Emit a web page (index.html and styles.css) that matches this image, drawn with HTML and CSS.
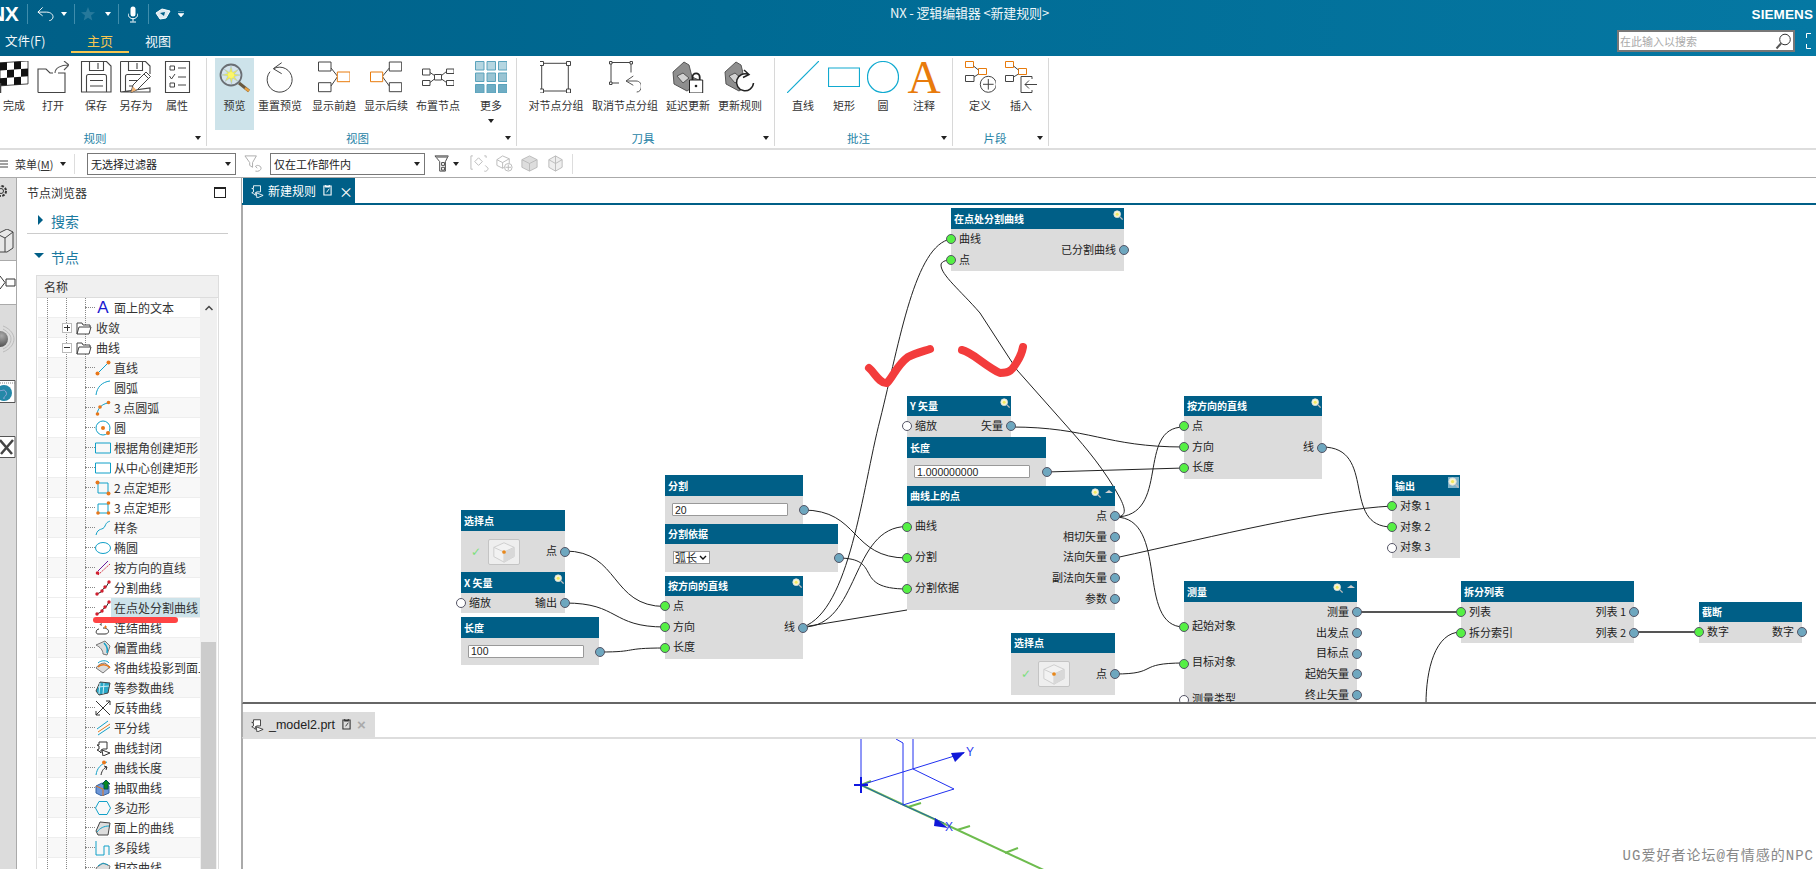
FILE: index.html
```html
<!DOCTYPE html>
<html lang="zh">
<head>
<meta charset="utf-8">
<title>NX - 逻辑编辑器</title>
<link rel="stylesheet" href="styles.css">
</head>
<body>
<svg class="defs" aria-hidden="true">
<defs>
<symbol id="flag" viewBox="0 0 32 32"><g transform="skewY(-4) translate(0 2)"><path d="M2 0h28v23H2z" fill="#fff" stroke="#222" stroke-width=".8"/><path d="M2 0h7v7.700H2zM16 0h7v7.700h-7zM9 7.700h7v7.700H9zM23 7.700h7v7.700h-7zM2 15.400h7V23H2zM16 15.400h7V23h-7z" fill="#111"/></g><path d="M2.500 22V32" stroke="#444" stroke-width="1.500"/></symbol>
<symbol id="open" viewBox="0 0 32 32"><path d="M1 31.500V8h8l4 4h3M21 12h7v19.500H1" fill="none" stroke="#444" stroke-width="1.100"/><path d="M18 12c0-5 6-8 13-8M27 0l5 4-5 5" fill="none" stroke="#555" stroke-width="1.100"/></symbol>
<symbol id="save" viewBox="0 0 32 32"><path d="M1.500.5h25l4.500 4.500v26H1.500zM9.500.5v9h14V.5M18 2v6M6.500 31V15.500q0-2 2-2h16q2 0 2 2V31M10 19.500h13M10 25h13" fill="none" stroke="#444" stroke-width="1.100"/></symbol>
<symbol id="saveas" viewBox="0 0 32 32"><path d="M.5.500h25L30 5v8M30 27v4H.5zM.5 31V.5M8.500.5v9h14V.5M17 2v6M5.500 31V15.500q0-2 2-2h13M9 19.500h8M9 25h4" fill="none" stroke="#444" stroke-width="1.100"/><path d="M11 31.500l2-7.500L26 11l4.500 4.500-13 13z" fill="#fff" stroke="#444"/><path d="M24 13l4.500 4.500" stroke="#444"/><path d="M11 31.500l2-6 3.500 3.500z" fill="#f0b070"/></symbol>
<symbol id="props" viewBox="0 0 32 32"><path d="M4.500.5h24v31h-24z" fill="#fff" stroke="#444" stroke-width="1.100"/><path d="M9 5h4.500v4H9zM9 22h4.500v4H9zM17 7h8M17 16h8M17 24h8" fill="none" stroke="#444"/><path d="M8.500 15l2 3 3.500-5" fill="none" stroke="#444"/></symbol>
<symbol id="preview" viewBox="0 0 32 32"><circle cx="12" cy="14" r="10.500" fill="#d6e4ec" stroke="#6a6f74" stroke-width="1.800"/><path d="M12 5l1.500 6.500L20 8l-5 5 6.500 1-6.500 1.500 4 5-5.500-3.500-1 6-1.500-6-5 3.500 3-5.500-6.500-1 6.500-1.500L5 8l5.500 3.500z" fill="#f5ee4a" stroke="#8fb6dc" stroke-width=".4"/><circle cx="12" cy="14" r="3" fill="#fbf66a"/><path d="M20 22l10 8" stroke="#6a5a40" stroke-width="3"/><path d="M26 27l4 3" stroke="#e8a040" stroke-width="2.500"/></symbol>
<symbol id="reset" viewBox="0 0 32 32"><path d="M17.700 1.700L9.300 7.700l8.400 5M10 7.500A12.500 12.500 0 1 1 6 10.700" fill="none" stroke="#444" stroke-width="1"/></symbol>
<symbol id="pred" viewBox="0 0 32 32"><path d="M.5 1h12.500v9H.5zM.5 21.700h12.500v9H.5z" fill="#fff" stroke="#444"/><path d="M13 7l6.300 8M13 25l6.300-9" stroke="#444"/><path d="M19.300 11H32v9.700H19.300z" fill="#fff" stroke="#e87b0c"/></symbol>
<symbol id="succ" viewBox="0 0 32 32"><path d="M19.300 1h12.400v9H19.300zM19.300 21.700h12.400v9H19.300z" fill="#fff" stroke="#444"/><path d="M19.300 7L12.700 15M19.300 25l-6.600-9" stroke="#444"/><path d="M.5 11h12.200v9.700H.5z" fill="#fff" stroke="#e87b0c"/></symbol>
<symbol id="layout" viewBox="0 0 32 32"><path d="M.5 8h7.500v6H.5zM.5 19.500h7.500v5H.5zM24.500 8H32v4.500h-7.500zM24.500 19.500H32v5h-7.500zM12.500 13.500h7v5.500h-7z" fill="#fff" stroke="#444"/><path d="M8 11.500l4.500 3M8 21.500l4.500-3.500M24.500 10.500l-5 4M24.500 21.500l-5-3.500" stroke="#444"/></symbol>
<symbol id="more" viewBox="0 0 32 32"><g stroke="#5aa3bc"><path d="M.5.5h8.500v8.500H.5zM12 .5h8.500v8.500H12zM23.500.5H32v8.500h-8.500z" fill="#b5d6e1"/><path d="M.5 12h8.500v8.500H.5zM12 12h8.500v8.500H12zM23.500 12H32v8.500h-8.500z" fill="#9ac4d3"/><path d="M.5 23.500h8.500V32H.5zM12 23.500h8.500V32H12zM23.500 23.500H32V32h-8.500z" fill="#6fadc4"/></g></symbol>
<symbol id="group" viewBox="0 0 32 32"><path d="M1.700 2.300h26.600V30H1.700z" fill="none" stroke="#444"/><path d="M-.5.500h4v4h-4zM26.500.5h4v4h-4zM-.5 28h4v4h-4zM26.500 28h4v4h-4z" fill="#fff" stroke="#444"/></symbol>
<symbol id="ungroup" viewBox="0 0 32 32"><path d="M2 1.500h20M2 1.500v20.500h8M22 1.500v10" fill="none" stroke="#444"/><path d="M.5.500h2.500v2.500H.5zM21 .5h2.500v2.500H21zM.5 21h2.500v2.500H.5z" fill="#fff" stroke="#444"/><path d="M24.300 15L17 20l7.300 4.300M17 20h10c4 0 5.500 3 5.300 6-.2 3-2 5-4.600 5" fill="none" stroke="#555"/></symbol>
<symbol id="delay" viewBox="0 0 32 32"><path d="M1 11L12 1l5 3 3 12 7 3v3l-12 8-13-7z" fill="#8e8e8e" stroke="#555"/><path d="M5 15l6-3 6 5-6 5z" fill="#d2d2d2" stroke="#555"/><path d="M17.500 19h13.200v13H17.500z" fill="#fff" stroke="#222"/><path d="M20.500 19v-3a3.600 3.600 0 0 1 7.200 0v3" fill="none" stroke="#222" stroke-width="1.800"/><circle cx="24" cy="25" r="1.300" fill="#222"/></symbol>
<symbol id="update" viewBox="0 0 32 32"><path d="M1 11L12 1l5 3 3 12 7 3v3l-12 8-13-7z" fill="#8e8e8e" stroke="#555"/><path d="M5 15l6-3 6 5-6 5z" fill="#d2d2d2" stroke="#555"/><path d="M29.500 22a8.500 8.500 0 1 1-5-8.500M20 9l5 4.500-6 3" fill="#fff" stroke="#222" stroke-width="1.500"/></symbol>
<symbol id="sline" viewBox="0 0 32 32"><path d="M0 32L32 0" stroke="#11aad0" stroke-width="1.200"/></symbol>
<symbol id="srect" viewBox="0 0 32 32"><path d="M.5 7h31v18.500H.5z" fill="none" stroke="#11aad0" stroke-width="1.200"/></symbol>
<symbol id="scircle" viewBox="0 0 32 32"><circle cx="16" cy="16" r="15.500" fill="none" stroke="#11aad0" stroke-width="1.200"/></symbol>
<symbol id="define" viewBox="0 0 32 32"><path d="M1.500.5h8v6h-8zM14.500 7.500h8v6h-8z" fill="#fff" stroke="#e87b0c"/><path d="M1.500 14.500h8.500v6H1.500z" fill="#fff" stroke="#444"/><path d="M9.500 5l5 4M10 16l4.500-3" stroke="#444"/><circle cx="24.300" cy="23.300" r="8" fill="#fff" stroke="#444"/><path d="M24.300 18v10.600M19 23.300h10.600" stroke="#444"/></symbol>
<symbol id="insert" viewBox="0 0 32 32"><path d="M.5.500h8v6h-8zM13.500 7.500h8v6h-8z" fill="#fff" stroke="#e87b0c"/><path d="M.5 14.500h8v6h-8z" fill="#fff" stroke="#444"/><path d="M8.500 5l5 4M8.500 16l5-3" stroke="#444"/><path d="M27 15.500H16v16h11V29M27 15.500V18" fill="#fff" stroke="#444"/><path d="M32.500 23.500H20l4-4M20 23.500l4 4" fill="none" stroke="#444"/></symbol>
<symbol id="mag" viewBox="0 0 12 12"><circle cx="5" cy="5" r="4" fill="#f7f6d0" stroke="#ddd"/><circle cx="5" cy="5" r="1.800" fill="#f0e860"/><path d="M8 8l3.500 3.500" stroke="#bbb" stroke-width="1.500"/></symbol>
<symbol id="t-line" viewBox="0 0 16 16"><path d="M3 13L13 3" stroke="#11a0c8"/><circle cx="2.500" cy="13.500" r="2" fill="#e8771a"/><circle cx="13.500" cy="2.500" r="2" fill="#e8771a"/></symbol>
<symbol id="t-arc" viewBox="0 0 16 16"><path d="M1 15C2 7 7 2 15 1" fill="none" stroke="#11a0c8"/></symbol>
<symbol id="t-arc3" viewBox="0 0 16 16"><path d="M2 14C3 8 7 4 13 3" fill="none" stroke="#11a0c8"/><circle cx="2.500" cy="14" r="1.800" fill="#e8771a"/><circle cx="5" cy="7" r="1.800" fill="#e8771a"/><circle cx="13.500" cy="2.500" r="1.800" fill="#e8771a"/></symbol>
<symbol id="t-circle" viewBox="0 0 16 16"><circle cx="8" cy="8" r="7" fill="none" stroke="#11a0c8"/><circle cx="8" cy="8" r="2" fill="#e8771a"/><circle cx="13" cy="13" r="2" fill="#e8771a"/></symbol>
<symbol id="t-rect" viewBox="0 0 16 16"><path d="M.5 3h15v10H.5z" fill="none" stroke="#11a0c8"/></symbol>
<symbol id="t-rect2" viewBox="0 0 16 16"><path d="M3 3h10v10H3z" fill="none" stroke="#11a0c8"/><circle cx="2.500" cy="2.500" r="2" fill="#e8771a"/><circle cx="13.500" cy="13.500" r="2" fill="#e8771a"/></symbol>
<symbol id="t-rect3" viewBox="0 0 16 16"><path d="M3 4h10v9H3z" fill="none" stroke="#11a0c8"/><circle cx="3" cy="13" r="1.800" fill="#e8771a"/><circle cx="13.500" cy="3" r="1.800" fill="#e8771a"/><circle cx="13.500" cy="13" r="1.800" fill="#e8771a"/></symbol>
<symbol id="t-spline" viewBox="0 0 16 16"><path d="M1 15C3 7 8 11 10 6S14 2 15 1" fill="none" stroke="#11a0c8"/></symbol>
<symbol id="t-ellipse" viewBox="0 0 16 16"><ellipse cx="8" cy="8" rx="7.500" ry="5.500" fill="none" stroke="#11a0c8"/></symbol>
<symbol id="t-dirline" viewBox="0 0 16 16"><path d="M3 11L13 1" stroke="#6a1b9a"/><path d="M3 15L15 4" stroke="#d02030" stroke-dasharray="1.500 1"/><circle cx="2.500" cy="13" r="1.800" fill="#d02030"/></symbol>
<symbol id="t-split" viewBox="0 0 16 16"><path d="M2 14l4-2 2-3 3-2 3-5" fill="none" stroke="#222"/><circle cx="2" cy="14" r="1.700" fill="#d02030"/><circle cx="7" cy="11" r="1.700" fill="#d02030"/><circle cx="10" cy="7" r="1.700" fill="#d02030"/><circle cx="14" cy="2" r="1.700" fill="#d02030"/></symbol>
<symbol id="t-join" viewBox="0 0 16 16"><path d="M4 1c9 0-3 4 3 4M8 8c7 0 7 6 2 6H3C0 14 1 9 4 9" fill="none" stroke="#333"/><path d="M9 7h3M10.500 5.500v3" stroke="#e8771a"/></symbol>
<symbol id="t-offset" viewBox="0 0 16 16"><path d="M1 5L10 1l5 5-3 9-4-1C8 10 5 7 1 5z" fill="#ddd" stroke="#777"/><path d="M9 3c3 3 4 6 3 10" fill="none" stroke="#11a0c8" stroke-width="1.500"/></symbol>
<symbol id="t-project" viewBox="0 0 16 16"><path d="M1 8L8 13l7-6-5-4C6 3 3 5 1 8z" fill="#ddd" stroke="#777"/><path d="M3 7C6 4 12 4 15 8" fill="none" stroke="#e8771a" stroke-width="1.500"/><path d="M3 3C6 0 12 0 14 3" fill="none" stroke="#11a0c8"/></symbol>
<symbol id="t-iso" viewBox="0 0 16 16"><path d="M1 11L5 2l10 1-2 10-9 2z" fill="#2aa8c8" stroke="#444"/><path d="M3 7l11-1M5 3l-1 11M9 3l-1 11" stroke="#cdeef7"/></symbol>
<symbol id="t-rev" viewBox="0 0 16 16"><path d="M1 1l14 14M15 1L1 15M1 11v4h4M15 5V1h-4" fill="none" stroke="#333"/></symbol>
<symbol id="t-bisect" viewBox="0 0 16 16"><path d="M2 9L13 1M3 15L15 7" stroke="#11a0c8"/><path d="M3 12L15 4" stroke="#e8771a"/></symbol>
<symbol id="t-close" viewBox="0 0 16 16"><path d="M2 5h2V2h8v7H8l-2 1v3l-2-2-2-1 2-1V6z" fill="#fff" stroke="#333"/><path d="M7 10l8 3-7 3z" fill="#fff" stroke="#333"/></symbol>
<symbol id="t-length" viewBox="0 0 16 16"><path d="M1 15C2 8 6 4 12 2" fill="none" stroke="#11a0c8"/><circle cx="9" cy="2.500" r="2" fill="#e8771a"/><path d="M6 15C7 10 9 8 12 7M9 6l3 1-1 3" fill="none" stroke="#333"/></symbol>
<symbol id="t-extract" viewBox="0 0 16 16"><path d="M1 6l6-3 7 3v7l-7 3-6-3z" fill="#6c96d8" stroke="#3060a0"/><path d="M1 6l7 3v7" fill="none" stroke="#e8771a"/><path d="M11 0l4 4h-2v5h-4V4H7z" fill="#0a8a20" stroke="#055"/></symbol>
<symbol id="t-poly" viewBox="0 0 16 16"><path d="M4 1.500h8L15.500 8 12 14.500H4L.5 8z" fill="none" stroke="#11a0c8"/></symbol>
<symbol id="t-surf" viewBox="0 0 16 16"><path d="M1 11L5 2l10 1-2 12H3z" fill="#ddd" stroke="#444"/><path d="M2 12C5 8 9 6 14 6" fill="none" stroke="#11a0c8"/></symbol>
<symbol id="t-polyline" viewBox="0 0 16 16"><path d="M1 1v14h8V6h5v9" fill="none" stroke="#11a0c8"/></symbol>
<symbol id="t-inter" viewBox="0 0 16 16"><path d="M1 8L8 3l7 3-2 8H4z" fill="#ddd" stroke="#777"/><path d="M3 6C6 3 10 3 13 5" fill="none" stroke="#11a0c8"/></symbol>
<symbol id="t-folder" viewBox="0 0 16 16"><path d="M1 14V3h5l1 2h7v2M1 14l2-7h12l-2 7z" fill="#fff" stroke="#444"/></symbol>
<symbol id="selcube" viewBox="0 0 32 26"><path d="M16 3l11 5v10l-11 6-11-6V8z" fill="#f2f2f2" stroke="#ccc"/><path d="M5 8l11 5 11-5M16 13v11" fill="none" stroke="#ccc"/><path d="M16 13l11-5v10l-11 6z" fill="#d8d8d8"/><circle cx="16" cy="13" r="2" fill="#e8871a"/></symbol>
</defs>
</svg>
<div class="app">
  <header class="top">
    <div class="top-row">
      <div class="qat">
        <span class="logo">NX</span><i class="qsep q1"></i>
        <svg class="qi q-undo" viewBox="0 0 18 16"><path d="M6 1L1 6l5 4M1 6h9c5 0 7 3 7 5s-2 4-4 4" fill="none" stroke="#fff"/></svg>
        <i class="tri q-t1"></i><i class="qsep q2"></i>
        <svg class="qi q-star" viewBox="0 0 14 14"><path d="M7 0l2 5 5 .3-4 3.200 1.300 5L7 10.800 2.700 13.500 4 8.500 0 5.300 5 5z" fill="#26799b"/></svg>
        <i class="tri q-t2"></i><i class="qsep q3"></i>
        <svg class="qi q-mic" viewBox="0 0 10 16"><rect x="2.500" y="0" width="5" height="10" rx="2.500" fill="#fff"/><path d="M0 7c0 7 10 7 10 0M5 12v3M2 15.500h6" fill="none" stroke="#fff"/></svg>
        <i class="qsep q4"></i>
        <svg class="qi q-touch" viewBox="0 0 16 12"><path d="M1 5l6-4 8 2-4 7-6 1z" fill="#dfe9ef" stroke="#fff"/><path d="M5 5l5-1-1 4z" fill="#005f87"/></svg>
        <svg class="qi q-more" viewBox="0 0 6 7"><path d="M0 0h6M0 2.500h6l-3 3.500z" fill="#fff" stroke="#fff" stroke-width=".6"/></svg>
      </div>
      <div class="win-title">NX - 逻辑编辑器 &lt;新建规则&gt;</div>
      <div class="brand">SIEMENS</div>
    </div>
    <div class="top-row row2">
      <span class="mtab t-file">文件(F)</span>
      <span class="mtab t-home">主页</span>
      <span class="mtab t-view">视图</span>
      <div class="search"><span class="ph">在此输入以搜索</span>
        <svg class="s-ic" viewBox="0 0 16 17"><circle cx="10" cy="6.500" r="5.300" fill="#fff" stroke="#333"/><path d="M6 10.500L1.500 15.500" stroke="#555" stroke-width="2"/></svg>
      </div>
      <svg class="corners" viewBox="0 0 6 16"><path d="M5 .5H.5V5M.5 11v4.500H5" fill="none" stroke="#fff"/></svg>
    </div>
  </header>

  <section class="ribbon">
    <div class="grp g1">
      <div class="btns">
        <div class="btn w28"><svg class="ri"><use href="#flag"/></svg><span>完成</span></div>
        <div class="btn w50"><svg class="ri"><use href="#open"/></svg><span>打开</span></div>
        <div class="btn w36"><svg class="ri"><use href="#save"/></svg><span>保存</span></div>
        <div class="btn w44"><svg class="ri"><use href="#saveas"/></svg><span>另存为</span></div>
        <div class="btn w38"><svg class="ri"><use href="#props"/></svg><span>属性</span></div>
      </div>
      <div class="gfoot"><span>规则</span><i class="tri dk"></i></div>
    </div>
    <div class="grp g2">
      <div class="btns">
        <div class="btn w39 on"><svg class="ri"><use href="#preview"/></svg><span>预览</span></div>
        <div class="btn w52"><svg class="ri"><use href="#reset"/></svg><span>重置预览</span></div>
        <div class="btn w56"><svg class="ri"><use href="#pred"/></svg><span>显示前趋</span></div>
        <div class="btn w48"><svg class="ri"><use href="#succ"/></svg><span>显示后续</span></div>
        <div class="btn w56"><svg class="ri"><use href="#layout"/></svg><span>布置节点</span></div>
        <div class="btn w50"><svg class="ri"><use href="#more"/></svg><span>更多</span><i class="tri dk sub"></i></div>
      </div>
      <div class="gfoot"><span>视图</span><i class="tri dk"></i></div>
    </div>
    <div class="grp g3">
      <div class="btns">
        <div class="btn w56"><svg class="ri"><use href="#group"/></svg><span>对节点分组</span></div>
        <div class="btn w82"><svg class="ri"><use href="#ungroup"/></svg><span>取消节点分组</span></div>
        <div class="btn w44"><svg class="ri"><use href="#delay"/></svg><span>延迟更新</span></div>
        <div class="btn w60"><svg class="ri"><use href="#update"/></svg><span>更新规则</span></div>
      </div>
      <div class="gfoot"><span>刀具</span><i class="tri dk"></i></div>
    </div>
    <div class="grp g4">
      <div class="btns">
        <div class="btn w44"><svg class="ri"><use href="#sline"/></svg><span>直线</span></div>
        <div class="btn w38"><svg class="ri"><use href="#srect"/></svg><span>矩形</span></div>
        <div class="btn w40"><svg class="ri"><use href="#scircle"/></svg><span>圆</span></div>
        <div class="btn w42"><svg class="ri" viewBox="0 0 32 32"><text class="bigA" x="16" y="31.500">A</text></svg><span>注释</span></div>
      </div>
      <div class="gfoot"><span>批注</span><i class="tri dk"></i></div>
    </div>
    <div class="grp g5">
      <div class="btns">
        <div class="btn w44"><svg class="ri"><use href="#define"/></svg><span>定义</span></div>
        <div class="btn w38"><svg class="ri"><use href="#insert"/></svg><span>插入</span></div>
      </div>
      <div class="gfoot"><span>片段</span><i class="tri dk"></i></div>
    </div>
  </section>

  <section class="tools">
    <svg class="burger" viewBox="0 0 8 8"><path d="M0 1h8M0 4h8M0 7h8" stroke="#444"/></svg>
    <span class="menu">菜单(<u>M</u>)</span><i class="tri dk t-a"></i>
    <i class="tsep s1"></i>
    <div class="combo c1"><span>无选择过滤器</span><i class="tri dk"></i></div>
    <svg class="ti ti1" viewBox="0 0 20 20"><path d="M1 2h12L9 9v5L6 12V9z" fill="#fff" stroke="#aaa"/><path d="M12 18c3 1 6-1 6-3s-2-3-4-3l-2 1 2 2" fill="none" stroke="#aaa"/></svg>
    <div class="combo c2"><span>仅在工作部件内</span><i class="tri dk"></i></div>
    <svg class="ti ti2" viewBox="0 0 20 20"><path d="M1 2h14L12 8v10H6V8z" fill="#fff" stroke="#444"/><path d="M8 9h3v3H8zM8 14h3v3H8z" fill="none" stroke="#444"/><path d="M2 3h12" stroke="#888" stroke-width="2"/></svg>
    <i class="tri dk t-b"></i>
    <svg class="ti ti3" viewBox="0 0 20 20"><path d="M3 2H1v14h2M15 2h2v2M5 8l4 4 4-4-4-4z" fill="none" stroke="#bbb"/><path d="M15 18c2 1 4-1 4-3l-3-3" fill="none" stroke="#bbb"/></svg>
    <svg class="ti ti4" viewBox="0 0 20 20"><path d="M2 6l6-4 7 3v6l-7 4-6-3z M2 6l6 3 7-4M8 9v6" fill="none" stroke="#bbb"/><circle cx="14" cy="14" r="4" fill="#fff" stroke="#bbb"/><path d="M14 11v6M11 14h6" stroke="#bbb"/></svg>
    <svg class="ti ti5" viewBox="0 0 20 20"><path d="M2 6l8-4 8 4v8l-8 4-8-4z" fill="#ddd" stroke="#bbb"/><path d="M2 6l8 4 8-4M10 10v8" fill="none" stroke="#bbb"/></svg>
    <svg class="ti ti6" viewBox="0 0 20 20"><path d="M3 6l7-4 7 4v8l-7 4-7-4z" fill="#eee" stroke="#bbb"/><path d="M10 2v16M3 6l7 4 7-4" fill="none" stroke="#bbb"/></svg>
    <i class="tsep s2"></i>
  </section>

  <main class="main">
    <nav class="rail">
      <div class="rail-g first">
        <svg class="rail-i gear" viewBox="0 0 16 16"><circle cx="1" cy="8" r="5" fill="none" stroke="#333" stroke-width="2" stroke-dasharray="2.500 1.400"/><circle cx="1" cy="8" r="2.500" fill="none" stroke="#333"/></svg>
        <svg class="rail-i book" viewBox="0 0 14 24"><path d="M-2 4l8-4 6 3v16l-6 4h-8z" fill="#e8e8e8" stroke="#444"/><path d="M-2 6l6 3v14M4 9l8-6" fill="none" stroke="#444"/></svg>
      </div>
      <div class="rail-g active">
        <svg class="rail-i" viewBox="0 0 16 16"><path d="M6 4h9v7H6z" fill="#fff" stroke="#333"/><path d="M0 1l5 6.500L0 14" fill="#fff" stroke="#333"/></svg>
      </div>
      <div class="rail-g last">
        <svg class="rail-i sphere" viewBox="0 0 16 28"><defs><radialGradient id="sph" cx=".6" cy=".3" r=".8"><stop offset="0" stop-color="#aaa"/><stop offset="1" stop-color="#444"/></radialGradient></defs><circle cx="0" cy="14" r="8" fill="url(#sph)"/><path d="M3 1c8 3 11 9 11 13s-3 10-11 13M3 4c5 3 8 6 8 10s-3 8-8 10" fill="none" stroke="#bbb"/></svg>
        <svg class="rail-i web" viewBox="0 0 16 23"><path d="M-2 .5h17v22H-2z" fill="#fff" stroke="#555"/><path d="M-2 3h17" stroke="#888" stroke-dasharray="1 1"/><circle cx="4" cy="13" r="8" fill="#2488a8"/><path d="M-2 10c4 2 6-2 8 2s-3 4-2 7" fill="none" stroke="#9ad"/></svg>
        <svg class="rail-i tool" viewBox="0 0 16 22"><path d="M-2 .5h17v21H-2z" fill="#fff" stroke="#555"/><path d="M0 4l12 14M13 4L1 18" stroke="#444" stroke-width="2.500"/></svg>
      </div>
    </nav>

    <aside class="panel">
      <div class="p-title"><span>节点浏览器</span><i class="p-max"></i></div>
      <div class="p-sec closed"><i class="caret-r"></i><span>搜索</span></div>
      <div class="p-sec open"><i class="caret-d"></i><span>节点</span></div>
      <div class="tbl">
        <div class="tbl-head">名称</div>
        <div class="tbl-body">
          <ul class="tree">
            <li class="leaf"><b class="tA">A</b><span>面上的文本</span></li>
            <li class="fold"><i class="pm plus"></i><svg class="fi"><use href="#t-folder"/></svg><span>收敛</span></li>
            <li class="fold"><i class="pm"></i><svg class="fi"><use href="#t-folder"/></svg><span>曲线</span></li>
            <li class="leaf"><svg class="li"><use href="#t-line"/></svg><span>直线</span></li>
            <li class="leaf"><svg class="li"><use href="#t-arc"/></svg><span>圆弧</span></li>
            <li class="leaf"><svg class="li"><use href="#t-arc3"/></svg><span>3 点圆弧</span></li>
            <li class="leaf"><svg class="li"><use href="#t-circle"/></svg><span>圆</span></li>
            <li class="leaf"><svg class="li"><use href="#t-rect"/></svg><span>根据角创建矩形</span></li>
            <li class="leaf"><svg class="li"><use href="#t-rect"/></svg><span>从中心创建矩形</span></li>
            <li class="leaf"><svg class="li"><use href="#t-rect2"/></svg><span>2 点定矩形</span></li>
            <li class="leaf"><svg class="li"><use href="#t-rect3"/></svg><span>3 点定矩形</span></li>
            <li class="leaf"><svg class="li"><use href="#t-spline"/></svg><span>样条</span></li>
            <li class="leaf"><svg class="li"><use href="#t-ellipse"/></svg><span>椭圆</span></li>
            <li class="leaf"><svg class="li"><use href="#t-dirline"/></svg><span>按方向的直线</span></li>
            <li class="leaf"><svg class="li"><use href="#t-split"/></svg><span>分割曲线</span></li>
            <li class="leaf sel"><svg class="li"><use href="#t-split"/></svg><span>在点处分割曲线</span></li>
            <li class="leaf"><svg class="li"><use href="#t-join"/></svg><span>连结曲线</span></li>
            <li class="leaf"><svg class="li"><use href="#t-offset"/></svg><span>偏置曲线</span></li>
            <li class="leaf"><svg class="li"><use href="#t-project"/></svg><span>将曲线投影到面上</span></li>
            <li class="leaf"><svg class="li"><use href="#t-iso"/></svg><span>等参数曲线</span></li>
            <li class="leaf"><svg class="li"><use href="#t-rev"/></svg><span>反转曲线</span></li>
            <li class="leaf"><svg class="li"><use href="#t-bisect"/></svg><span>平分线</span></li>
            <li class="leaf"><svg class="li"><use href="#t-close"/></svg><span>曲线封闭</span></li>
            <li class="leaf"><svg class="li"><use href="#t-length"/></svg><span>曲线长度</span></li>
            <li class="leaf"><svg class="li"><use href="#t-extract"/></svg><span>抽取曲线</span></li>
            <li class="leaf"><svg class="li"><use href="#t-poly"/></svg><span>多边形</span></li>
            <li class="leaf"><svg class="li"><use href="#t-surf"/></svg><span>面上的曲线</span></li>
            <li class="leaf"><svg class="li"><use href="#t-polyline"/></svg><span>多段线</span></li>
            <li class="leaf"><svg class="li"><use href="#t-inter"/></svg><span>相交曲线</span></li>
          </ul>
          <div class="sbar"><svg class="chev" viewBox="0 0 8 6"><path d="M.5 5L4 1.500 7.500 5" fill="none" stroke="#444" stroke-width="1.500"/></svg><div class="thumb"></div></div>
        </div>
      </div>
      <svg class="redline" viewBox="0 0 90 8"><path d="M3 4H82" stroke="#f44" stroke-width="6" stroke-linecap="round"/></svg>
    </aside>

    <div class="work">
      <div class="tabbar">
        <div class="doc-tab">
          <svg class="dt-i" viewBox="0 0 16 16"><path d="M2 5h2V2h8v7H8l-2 1v3l-2-2-2-1 2-1V6z" fill="none" stroke="#fff"/><path d="M7 10l8 3-7 3z" fill="none" stroke="#fff"/></svg>
          <span>新建规则</span>
          <svg class="dt-d" viewBox="0 0 10 12"><path d="M1 1h8v10H1z M3 0v2h4V0" fill="none" stroke="#fff" stroke-width="1.200"/><path d="M4 8l3-4" stroke="#fff"/></svg>
          <span class="dt-x">×</span>
        </div>
      </div>
      <div class="canvas">
        <div class="plane">
          <svg class="wires" viewBox="0 0 1816 869">
            <g fill="none" stroke="#222" stroke-width="1">
              <path d="M565 551C620 551 610 606.500 665 606.500"/>
              <path d="M565 603C620 603 610 627 665 627"/>
              <path d="M600 652C640 652 620 648 665 648"/>
              <path d="M803 510C860 510 850 558 907 558"/>
              <path d="M838 558C885 558 850 589 907 589"/>
              <path d="M803 627C860 627 850 526.500 907 526.500"/>
              <path d="M803 627C850 610 862 490 880 420C900 340 915 245 951 239"/>
              <path d="M803 627L907 610"/>
              <path d="M1115 517C1128 517 1125 508 1120 498C1105 470 1085 447 1072 432L1017 370L980 313C960 290 941 275 941 265C941 262 945 260 951 260"/>
              <path d="M1115 517C1172 517 1135 427 1184 427"/>
              <path d="M1115 517C1170 517 1135 627 1184 627"/>
              <path d="M1011 427C1090 427 1105 447 1184 447"/>
              <path d="M1046 472L1184 468"/>
              <path d="M1322 447C1378 447 1340 527 1392 527"/>
              <path d="M1115 558C1220 535 1320 510 1392 506"/>
              <path d="M1115 674C1160 674 1135 663 1184 663"/>
              <path d="M1461 632C1435 632 1426 670 1426 704"/>
              <path d="M1357 612H1461M1634 632H1699" stroke="#555" stroke-width="2"/>
            </g>
            <g fill="none" stroke="#f33c3c" stroke-width="8" stroke-linecap="round" stroke-linejoin="round">
              <path d="M869 368C874 372 880 384 887 383C893 377 897 365 908 357C915 353 924 351 930 349"/>
              <path d="M962 350C972 352 985 366 1000 373C1010 373 1012 370 1017 362C1020 357 1022 353 1023 347"/>
            </g>
          </svg>

          <div class="node n-sel1"><div class="nh">选择点</div>
            <div class="nb sel-b"><i class="chk">✓</i><div class="cube"><svg viewBox="0 0 32 26"><use href="#selcube"/></svg></div>
              <div class="col out grow"><div class="r"><span>点</span><i class="port o"></i></div></div></div></div>
          <div class="node n-xv"><div class="nh">X 矢量<svg class="mg"><use href="#mag"/></svg></div>
            <div class="nb"><div class="col in"><div class="r"><i class="port w"></i><span>缩放</span></div></div><div class="col out"><div class="r"><span>输出</span><i class="port o"></i></div></div></div></div>
          <div class="node n-len1"><div class="nh">长度</div>
            <div class="nb par"><input class="num" value="100"><i class="port o"></i></div></div>
          <div class="node n-div"><div class="nh">分割</div>
            <div class="nb par"><input class="num" value="20"><i class="port o"></i></div></div>
          <div class="node n-by"><div class="nh">分割依据</div>
            <div class="nb par"><div class="pick"><span>弧长</span><svg viewBox="0 0 8 5"><path d="M1 1l3 3 3-3" fill="none" stroke="#111" stroke-width="1.400"/></svg></div><i class="port o"></i></div></div>
          <div class="node n-dl1"><div class="nh">按方向的直线<svg class="mg"><use href="#mag"/></svg></div>
            <div class="nb"><div class="col in"><div class="r"><i class="port g"></i><span>点</span></div><div class="r"><i class="port g"></i><span>方向</span></div><div class="r"><i class="port g"></i><span>长度</span></div></div>
              <div class="col out mid"><div class="r"><span>线</span><i class="port o"></i></div></div></div></div>
          <div class="node n-split"><div class="nh">在点处分割曲线<svg class="mg"><use href="#mag"/></svg></div>
            <div class="nb"><div class="col in"><div class="r"><i class="port g"></i><span>曲线</span></div><div class="r"><i class="port g"></i><span>点</span></div></div>
              <div class="col out mid"><div class="r"><span>已分割曲线</span><i class="port o"></i></div></div></div></div>
          <div class="node n-yv"><div class="nh">Y 矢量<svg class="mg"><use href="#mag"/></svg></div>
            <div class="nb"><div class="col in"><div class="r"><i class="port w"></i><span>缩放</span></div></div><div class="col out"><div class="r"><span>矢量</span><i class="port o"></i></div></div></div></div>
          <div class="node n-len2"><div class="nh">长度</div>
            <div class="nb par"><input class="num" value="1.000000000"><i class="port o"></i></div></div>
          <div class="node n-pt"><div class="nh">曲线上的点<svg class="mg two"><use href="#mag"/></svg><i class="fold-t"></i></div>
            <div class="nb"><div class="col in tall3"><div class="r"><i class="port g"></i><span>曲线</span></div><div class="r"><i class="port g"></i><span>分割</span></div><div class="r"><i class="port g"></i><span>分割依据</span></div></div>
              <div class="col out"><div class="r"><span>点</span><i class="port o"></i></div><div class="r"><span>相切矢量</span><i class="port o"></i></div><div class="r"><span>法向矢量</span><i class="port o"></i></div><div class="r"><span>副法向矢量</span><i class="port o"></i></div><div class="r"><span>参数</span><i class="port o"></i></div></div></div></div>
          <div class="node n-dl2"><div class="nh">按方向的直线<svg class="mg"><use href="#mag"/></svg></div>
            <div class="nb"><div class="col in"><div class="r"><i class="port g"></i><span>点</span></div><div class="r"><i class="port g"></i><span>方向</span></div><div class="r"><i class="port g"></i><span>长度</span></div></div>
              <div class="col out mid"><div class="r"><span>线</span><i class="port o"></i></div></div></div></div>
          <div class="node n-out"><div class="nh">输出<svg class="mg boxed"><use href="#mag"/></svg></div>
            <div class="nb"><div class="col in"><div class="r"><i class="port g"></i><span>对象 1</span></div><div class="r"><i class="port g"></i><span>对象 2</span></div><div class="r"><i class="port w"></i><span>对象 3</span></div></div></div></div>
          <div class="node n-meas"><div class="nh">测量<svg class="mg two"><use href="#mag"/></svg><i class="fold-t"></i></div>
            <div class="nb"><div class="col in tall"><div class="r"><i class="port g"></i><span>起始对象</span></div><div class="r"><i class="port g"></i><span>目标对象</span></div><div class="r"><i class="port w"></i><span>测量类型</span></div></div>
              <div class="col out"><div class="r"><span>测量</span><i class="port o"></i></div><div class="r"><span>出发点</span><i class="port o"></i></div><div class="r"><span>目标点</span><i class="port o"></i></div><div class="r"><span>起始矢量</span><i class="port o"></i></div><div class="r"><span>终止矢量</span><i class="port o"></i></div></div></div></div>
          <div class="node n-sel2"><div class="nh">选择点</div>
            <div class="nb sel-b"><i class="chk">✓</i><div class="cube"><svg viewBox="0 0 32 26"><use href="#selcube"/></svg></div>
              <div class="col out grow"><div class="r"><span>点</span><i class="port o"></i></div></div></div></div>
          <div class="node n-list"><div class="nh">拆分列表</div>
            <div class="nb"><div class="col in"><div class="r"><i class="port g"></i><span>列表</span></div><div class="r"><i class="port g"></i><span>拆分索引</span></div></div>
              <div class="col out"><div class="r"><span>列表 1</span><i class="port o"></i></div><div class="r"><span>列表 2</span><i class="port o"></i></div></div></div></div>
          <div class="node n-trunc"><div class="nh">截断</div>
            <div class="nb"><div class="col in"><div class="r"><i class="port g"></i><span>数字</span></div></div><div class="col out"><div class="r"><span>数字</span><i class="port o"></i></div></div></div></div>
        </div>
      </div>
      <div class="tabbar2">
        <div class="doc-tab2">
          <svg class="dt-i" viewBox="0 0 16 16"><path d="M2 5h2V2h8v7H8l-2 1v3l-2-2-2-1 2-1V6z" fill="#fff" stroke="#333"/><path d="M7 10l8 3-7 3z" fill="#fff" stroke="#333"/></svg>
          <span>_model2.prt</span>
          <svg class="dt-d" viewBox="0 0 10 12"><path d="M1 1h8v10H1z M3 0v2h4V0" fill="none" stroke="#333" stroke-width="1.200"/><path d="M4 8l3-4" stroke="#333"/></svg>
          <span class="dt-x2">×</span>
        </div>
      </div>
      <div class="view">
        <div class="plane2">
          <svg class="wires" viewBox="0 0 1816 869">
            <g fill="none" stroke="#6ebc4e" stroke-width="2">
              <path d="M861 785L1048 872"/>
              <path d="M908 807l13-4M957 830l13-4M1005 853l13-5M861 785l10-4"/>
            </g>
            <g fill="none" stroke="#2030f0" stroke-width="1">
              <path d="M861 739V785M903 743V805M896 739l7 4M913 739V769"/>
              <path d="M861 785L964 753M913 769L954 789L903 805"/>
              <path d="M861 785L903 805L944 823" stroke="#2060b0"/>
              <path d="M854 785h14M861 777v16" stroke-width="2" stroke="#1018e0"/>
            </g>
            <path d="M965 752l-14 1 4 9zM948 828l-13-10-1 8z" fill="#1018d8"/>
          </svg>
          <span class="ax ax-y">Y</span><span class="ax ax-x">X</span>
        </div>
        <div class="mark">UG爱好者论坛@有情感的NPC</div>
      </div>
    </div>
  </main>
</div>
</body>
</html>
```

FILE: styles.css
```css
*{box-sizing:border-box}
html,body{margin:0;padding:0;height:100%;overflow:hidden;background:#fff}
body{font-family:"Noto Sans CJK SC","Liberation Sans",sans-serif;font-size:12px;color:#222}
i{font-style:normal;display:block}
.defs{position:absolute;width:0;height:0}
.app{width:1816px;height:869px;display:flex;flex-direction:column;overflow:hidden}

/* Title bar */
.top{height:56px;flex:none;background:linear-gradient(90deg,#005f87 0,#006a93 40%,#0578a3 100%);color:#fff}
.top-row{height:28px;display:flex;position:relative}
.qat{flex:0 0 890px;display:flex;align-items:center;height:28px;overflow:hidden}
.logo{font:bold 21px/28px "Liberation Sans",sans-serif;margin-left:-10px;width:37px;flex:none;letter-spacing:-.5px}
.qsep{width:1px;height:20px;background:#3f8dac;flex:none}
.tri{width:0;height:0;border:3px solid transparent;border-top:4px solid #fff;border-bottom:0;flex:none}
.tri.dk{border-top-color:#222}
.qi{flex:none;display:block}
.q-undo{width:17px;height:16px;margin-left:9px}
.q-t1{margin-left:7px}
.q2{margin-left:7px}
.q-star{width:14px;height:14px;margin-left:6px}
.q-t2{margin-left:10px}
.q3{margin-left:7px}
.q-mic{width:10px;height:17px;margin-left:9px}
.q4{margin-left:10px}
.q-touch{width:16px;height:12px;margin-left:6px}
.q-more{width:6px;height:7px;margin-left:7px}
.win-title{font-size:13px;line-height:26px;white-space:nowrap;color:#eef6f9;letter-spacing:-.15px}
.brand{margin-left:auto;padding-right:3px;font:bold 13.5px/30px "Liberation Sans",sans-serif;letter-spacing:.1px;color:#fff}
.row2{align-items:flex-start}
.mtab{font-size:13px;line-height:26px;flex:none;color:#f2f7f9}
.t-file{margin-left:5px;width:41px;font-size:12.500px}
.t-home{margin-left:25px;width:58px;text-align:center;color:#f6c650;height:25px;border-bottom:2px solid #f6c650}
.t-view{margin-left:16px;width:26px}
.search{margin-left:auto;margin-top:2px;width:178px;height:22px;background:#fff;border:2px solid #777;display:flex;align-items:center;justify-content:space-between;padding:0 1px}
.ph{color:#aaa;font-size:11px}
.s-ic{width:16px;height:17px;margin-right:1px}
.corners{width:6px;height:16px;margin:5px 4px 0 11px;flex:none}

/* Ribbon */
.ribbon{height:94px;flex:none;display:flex;border-bottom:2px solid #ddd;padding-top:2px}
.grp{display:flex;flex-direction:column;height:88px;border-right:1px solid #d8d8d8;flex:none}
.btns{display:flex;height:74px}
.g1{margin-left:-16px;padding-left:16px;width:223px}
.g2{width:310px;padding-left:8px}
.g3{width:258px;padding-left:11px}
.g4{width:178px;padding-left:6px}
.g5{width:96px;padding-left:5px}
.btn{display:flex;flex-direction:column;align-items:center;flex:none;padding-top:3px;position:relative}
.btn span{font-size:11px;line-height:14px;margin-top:5px;white-space:nowrap;color:#333}
.btn.on{background:#cde3ea}
.ri{width:32px;height:32px;flex:none;display:block;overflow:visible}
.w28{width:28px}.w36{width:36px}.w38{width:38px}.w39{width:39px}.w40{width:40px}.w42{width:42px}.w44{width:44px}.w48{width:48px}.w50{width:50px}.w52{width:52px}.w56{width:56px}.w60{width:60px}.w82{width:82px}
.sub{margin-top:7px}
.bigA{font-family:"Liberation Serif",serif;font-size:46px;fill:#e87b0c;text-anchor:middle}
.gfoot{flex:1;display:flex;align-items:center;color:#1f83a6;font-size:11.500px;padding-right:5px}
.gfoot span{flex:1;text-align:center;padding-left:0;margin-right:5px}

/* Toolbar */
.tools{height:28px;flex:none;display:flex;align-items:center;border-bottom:1px solid #aaa}
.burger{width:8px;height:8px;flex:none}
.menu{margin-left:7px;font-size:11px;width:45px;color:#333;white-space:nowrap}
.t-a{margin-left:0}
.tsep{width:1px;height:20px;background:#ddd;flex:none}
.s1{margin-left:8px}
.combo{height:22px;border:1px solid #777;display:flex;align-items:center;justify-content:space-between;padding:0 4px 0 3px;font-size:11px;flex:none;background:#fff}
.c1{margin-left:12px;width:149px}
.c2{margin-left:7px;width:155px}
.ti{width:19px;height:19px;flex:none}
.ti1{margin-left:8px}
.ti2{margin-left:9px}
.t-b{margin-left:0}
.ti3{margin-left:11px}
.ti4{margin-left:6px}
.ti5{margin-left:6px}
.ti6{margin-left:7px}
.s2{margin-left:7px}

/* Main split */
.main{flex:1;min-height:0;display:flex}
.rail{width:17px;flex:none;display:flex;flex-direction:column;border-right:1px solid #aaa;background:#dcdcdc}
.rail-g{display:flex;flex-direction:column;align-items:flex-start;overflow:hidden}
.rail-i{display:block;width:16px;flex:none}
.first{height:83px;border-bottom:1px solid #aaa}
.gear{height:16px;margin-top:5px}
.book{height:24px;margin-top:30px}
.active{height:44px;background:#fff;border-bottom:1px solid #aaa;justify-content:center}
.active .rail-i{height:16px}
.last{flex:1}
.sphere{height:28px;margin-top:20px}
.web{height:23px;margin-top:27px}
.tool{height:22px;margin-top:33px}

/* Side panel */
.panel{width:225px;flex:none;border-right:1px solid #aaa;padding-left:10px;display:flex;flex-direction:column;position:relative;min-height:0;overflow:hidden}
.p-title{height:28px;display:flex;align-items:center;justify-content:space-between;padding-right:15px;font-size:12px;color:#333}
.p-max{width:12px;height:11px;border:1px solid #222;border-top-width:2px}
.p-sec{display:flex;align-items:center;color:#1b7aa0;font-size:14px;flex:none;width:201px}
.p-sec span{margin-top:3px}
.closed{height:28px;border-bottom:1px solid #ccc;padding-left:11px}
.open{height:42px;padding-left:7px}
.caret-r{width:0;height:0;border:5px solid transparent;border-left:5px solid #005f87;border-right:0;margin-right:8px}
.caret-d{width:0;height:0;border:5px solid transparent;border-top:5px solid #005f87;border-bottom:0;margin-right:7px}
.tbl{margin-left:9px;width:183px;flex:1;min-height:0;border:1px solid #ddd;border-bottom:0;display:flex;flex-direction:column;overflow:hidden;margin-top:-1px}
.tbl-head{height:22px;flex:none;background:#f0f0f0;border-bottom:1px solid #ddd;line-height:21px;padding-left:7px;font-size:12px;color:#333}
.tbl-body{flex:1;min-height:0;display:flex;overflow:hidden;padding-left:1px}
.tree{list-style:none;margin:0;padding:0;width:162px;flex:none;position:relative;overflow:hidden}
.tree::after{content:"";position:absolute;inset:0;pointer-events:none;
 background:
  linear-gradient(#888 50%,transparent 50%) 9px 0/1px 2px repeat-y,
  linear-gradient(#888 50%,transparent 50%) 28px 0/1px 2px repeat-y,
  linear-gradient(#888 50%,transparent 50%) 47px 0/1px 2px repeat-y}
.tree li{height:20px;display:flex;align-items:center;position:relative;border-bottom:1px solid #eee;font-size:12px;white-space:nowrap;color:#333;overflow:hidden}
.tree li:nth-child(even){background:#f8f8f8}
.leaf{padding-left:57px}
.fold{padding-left:24px}
.leaf::before{content:"";position:absolute;left:47px;top:9px;width:10px;border-top:1px dotted #888}
.li{width:16px;height:16px;flex:none;margin-right:3px}
.fi{width:16px;height:16px;flex:none;margin:0 4px 0 4px;z-index:1}
.tA{font:normal 17px/16px "Liberation Sans",sans-serif;color:#1a1ad0;width:16px;margin-right:3px;flex:none;text-align:center}
.pm{width:10px;height:10px;border:1px solid #bbb;background:#fff linear-gradient(#333,#333) center/6px 1px no-repeat;flex:none;position:relative;z-index:1}
.pm.plus::after{content:"";position:absolute;left:3.500px;top:1px;width:1px;height:6px;background:#333}
.tree li.sel{background:linear-gradient(#cde3ea,#cde3ea) 73px 0/100% 100% no-repeat}
.sbar{width:17px;flex:none;background:#f0f0f0;display:flex;flex-direction:column;align-items:center;padding-top:7px}
.chev{width:8px;height:6px;flex:none;display:block}
.thumb{margin-top:331px;width:15px;flex:1;background:#ccc}
.redline{position:absolute;left:76px;top:438px;width:90px;height:8px}

/* Workspace */
.work{flex:1;min-width:0;display:flex;flex-direction:column}
.tabbar{height:27px;flex:none;border-bottom:2px solid #005f87;display:flex;align-items:flex-end}
.doc-tab{width:112px;height:25px;margin-left:1px;background:#005f87;color:#fff;display:flex;align-items:center;padding-left:7px;font-size:12px}
.dt-i{width:14px;height:14px;flex:none}
.doc-tab span:first-of-type{margin-left:4px}
.dt-d{width:9px;height:11px;margin-left:7px;flex:none}
.dt-x{margin-left:7px;font-size:14px;color:#fff}
.canvas{height:499px;flex:none;position:relative;overflow:hidden;border-left:1px solid #aaa;border-bottom:2px solid #666;background:#fff}
.plane{position:absolute;left:-243px;top:-205px;width:1816px;height:869px}
.wires{position:absolute;left:0;top:0;width:1816px;height:869px;overflow:visible}

/* Nodes */
.node{position:absolute;background:#dcdcdc;display:flex;flex-direction:column}
.nh{height:21px;flex:none;background:#005f87;color:#fff;font-size:10px;font-weight:bold;line-height:21px;padding-left:3px;white-space:nowrap;position:relative;overflow:visible}
.nb{display:flex;justify-content:space-between;flex:1;min-height:0}
.col{display:flex;flex-direction:column}
.out{align-items:flex-end}
.grow{flex:1;justify-content:center}
.mid{justify-content:center}
.r{height:20.700px;display:flex;align-items:center;position:relative;flex:none;font-size:11px;line-height:14px;white-space:nowrap;color:#222}
.r span{margin-top:-3px}
.in .r{padding-left:8px}
.out .r{padding-right:8px}
.tall3{padding-top:5px}
.tall3 .r{height:31px}
.tall{padding-top:7px}
.tall .r{height:36.500px}
.tall .r span{margin-top:-5px}
.port{position:absolute;width:10px;height:10px;border-radius:50%;border:1px solid #556;top:50%;margin-top:-5px}
.in .port{left:-5px}
.out .port{right:-5px}
.port.g{background:#55f044}
.port.o{background:#6ea7bf}
.port.w{background:#fff}
.mg{position:absolute;right:1px;top:2px;width:10px;height:10px}
.mg.two{right:14px}
.mg.boxed{background:#7fb3c8;width:11px;height:11px}
.fold-t{position:absolute;right:2px;top:4px;width:0;height:0;border:4px solid transparent;border-bottom:3px solid #cfcfcf;border-top:0}
.par{align-items:center;padding-left:7px;position:relative}
.num{width:116px;height:13px;border:1px solid #999;border-radius:1px;padding:0 2px;font:10.500px/11px "Liberation Sans",sans-serif;background:#fff;color:#222;outline:0;margin-top:-1px}
.pick{width:37px;height:13px;border:1px solid #999;font-size:11px;line-height:11px;background:#fff;margin-left:1px;margin-top:-1px;display:flex;align-items:center;justify-content:space-between;padding:0 2px 0 1px;color:#222}
.pick svg{width:8px;height:5px;flex:none}
.par .port{position:absolute;right:-6px;top:50%}
.sel-b{align-items:center;padding-left:10px}
.chk{font:12px/12px "DejaVu Sans",sans-serif;color:#7be07b;width:17px;flex:none}
.cube{width:32px;height:26px;border:1px solid #c4c4c4;border-radius:2px;background:#eee;flex:none}
.cube svg{display:block;width:30px;height:24px}
.n-sel1{left:461px;top:510px;width:104px;height:62px}
.n-xv{left:461px;top:572px;width:104px;height:41px}
.n-len1{left:461px;top:617px;width:138px;height:48px}
.n-div{left:665px;top:475px;width:138px;height:49px}
.n-by{left:665px;top:524px;width:173px;height:48px}
.n-by .nh{height:20px;line-height:20px}
.n-dl1{left:665px;top:576px;width:138px;height:83px}
.n-split{left:951px;top:208px;width:173px;height:63px}
.n-yv{left:907px;top:396px;width:104px;height:41px}
.n-yv .nh,.n-pt .nh,.n-dl1 .nh,.n-dl2 .nh,.n-sel2 .nh,.n-trunc .nh{height:20px;line-height:20px}
.n-len2{left:907px;top:437px;width:139px;height:49px}
.n-pt{left:907px;top:486px;width:208px;height:124px}
.n-dl2{left:1184px;top:396px;width:138px;height:83px}
.n-out{left:1392px;top:475px;width:68px;height:83px}
.n-meas{left:1184px;top:581px;width:173px;height:140px}
.n-sel2{left:1011px;top:633px;width:104px;height:62px}
.n-list{left:1461px;top:581px;width:173px;height:62px}
.n-trunc{left:1699px;top:602px;width:103px;height:41px}

/* Lower tab + view */
.tabbar2{height:33px;flex:none;border-left:1px solid #aaa;display:flex;align-items:flex-end;position:relative}
.doc-tab2{width:132px;height:25px;background:#dcdcdc;display:flex;align-items:center;padding-left:7px;font:12.500px "Liberation Sans","Noto Sans CJK SC",sans-serif;color:#222}
.doc-tab2 span:first-of-type{margin-left:5px}
.dt-x2{margin-left:6px;font-size:15px;font-weight:bold;color:#aaa}
.view{flex:1;min-height:0;border-left:1px solid #aaa;border-top:2px solid #ddd;position:relative;overflow:hidden}
.plane2{position:absolute;left:-243px;top:-739px;width:1816px;height:869px}
.ax{position:absolute;font:12px/12px "Liberation Sans",sans-serif;color:#3040f0}
.ax-y{left:966px;top:746px}
.ax-x{left:945px;top:821px}
.mark{position:absolute;right:2px;bottom:3px;font:14px/20px "Liberation Mono","Noto Sans CJK SC",monospace;letter-spacing:1px;color:#888;white-space:nowrap}
```
